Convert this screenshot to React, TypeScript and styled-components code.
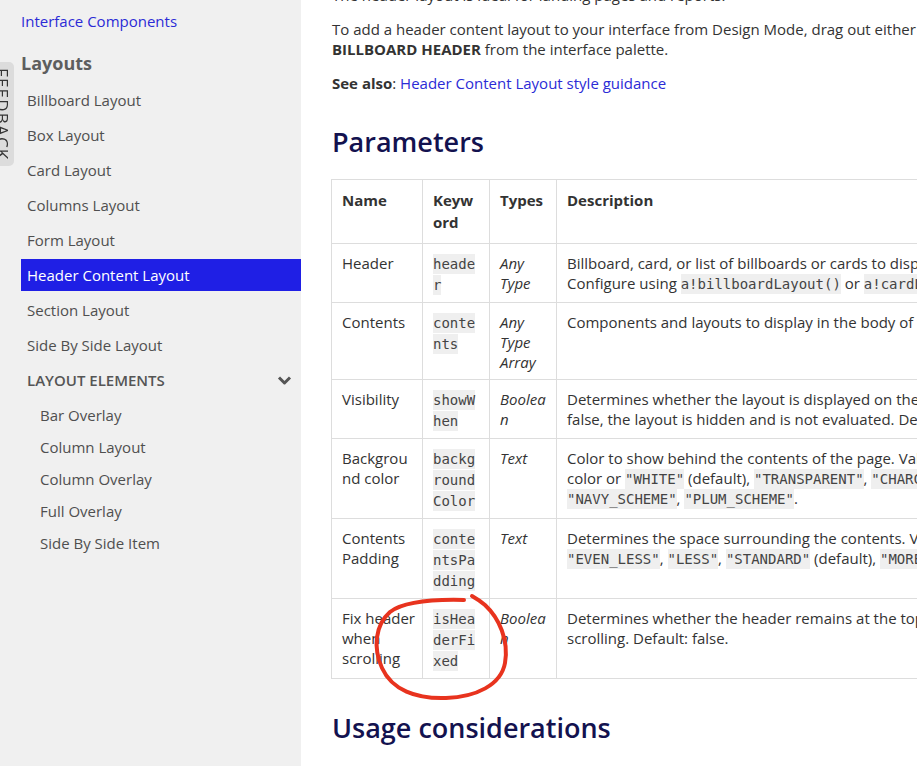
import React from 'react';
import styled, { createGlobalStyle } from 'styled-components';

const GlobalStyle = createGlobalStyle`
  html, body {
    margin: 0;
    padding: 0;
    overflow: hidden;
    background: #ffffff;
  }
  body {
    font-family: "Open Sans", "Liberation Sans", sans-serif;
    color: #333;
  }
`;

const Page = styled.div`
  display: flex;
  height: 766px;
  overflow: hidden;
`;

const Sidebar = styled.nav`
  flex: 0 0 301px;
  background: #f0f0f0;
  padding: 11px 0 0 21px;
  box-sizing: border-box;
`;

const TopLink = styled.a`
  display: block;
  font-size: 15px;
  line-height: 20px;
  color: #2b2bd6;
  text-decoration: none;
`;

const SideHeading = styled.div`
  margin: 20px 0 9px;
  font-size: 18px;
  line-height: 24px;
  font-weight: 700;
  color: #5e5e5e;
`;

const NavList = styled.ul`
  list-style: none;
  margin: 0;
  padding: 0;
`;

const NavItem = styled.li<{ $active?: boolean; $nested?: boolean }>`
  display: flex;
  align-items: center;
  justify-content: space-between;
  height: 32px;
  margin-bottom: ${p => (p.$nested ? '0' : '3px')};
  padding: 0 9px 0 ${p => (p.$nested ? '19px' : '6px')};
  font-size: 15px;
  color: ${p => (p.$active ? '#fff' : '#4f4f4f')};
  background: ${p => (p.$active ? '#1f1fe5' : 'transparent')};
`;

const GroupLabel = styled(NavItem)`
  font-weight: 600;
  text-transform: uppercase;
  color: #555;
`;

const FeedbackTab = styled.div`
  position: fixed;
  left: -10px;
  top: 62px;
  width: 24px;
  height: 104px;
  background: #dcdcdc;
  border-radius: 0 5px 5px 0;
  writing-mode: vertical-rl;
  display: flex;
  align-items: center;
  justify-content: center;
  font-size: 17px;
  font-weight: 400;
  letter-spacing: 1.2px;
  line-height: 24px;
  color: #333;
`;

const Main = styled.main`
  flex: 0 0 auto;
  width: 800px;
  padding: 0 0 0 31px;
  margin-top: -15px;
`;

const Para = styled.p`
  margin: 0 0 14px;
  font-size: 15px;
  line-height: 20px;
  color: #333;
`;

const Link = styled.a`
  color: #2b2bd6;
  text-decoration: none;
`;

const SectionTitle = styled.h2`
  margin: 33px 0 21px;
  font-size: 27px;
  line-height: 32px;
  font-weight: 600;
  color: #13124f;
`;

const Table = styled.table`
  width: 790px;
  border-collapse: collapse;
  table-layout: fixed;
  margin-left: -1px;
`;

const Th = styled.th`
  border: 1px solid #dddddd;
  padding: 9px 10px 10px 10px;
  text-align: left;
  vertical-align: top;
  font-size: 15px;
  line-height: 22px;
  font-weight: 700;
  color: #333;
  overflow-wrap: anywhere;
`;

const Td = styled.td<{ $mono?: boolean; $italic?: boolean }>`
  border: 1px solid #dddddd;
  padding: 9px 6px 7px 10px;
  vertical-align: top;
  font-size: 15px;
  line-height: ${p => (p.$mono ? '21px' : '20px')};
  font-style: ${p => (p.$italic ? 'italic' : 'normal')};
  color: #333;
  overflow-wrap: anywhere;
  word-break: ${p => (p.$mono ? 'break-all' : 'normal')};
`;

/* zero line-height keeps the mono face from stretching the row's line boxes */
const Code = styled.code`
  font-family: "DejaVu Sans Mono", "Liberation Mono", monospace;
  font-size: 14px;
  line-height: 0;
  background: #efefef;
  color: #444;
  padding: 2px 0;
`;

const Annotation = styled.svg`
  position: fixed;
  left: 0;
  top: 0;
  width: 917px;
  height: 766px;
  pointer-events: none;
`;

const Chevron = () => (
  <svg width="15" height="9" viewBox="0 0 15 9">
    <path d="M2 1.5 L7.5 7 L13 1.5" fill="none" stroke="#555" strokeWidth="3" strokeLinejoin="round" />
  </svg>
);

const layouts = [
  'Billboard Layout',
  'Box Layout',
  'Card Layout',
  'Columns Layout',
  'Form Layout',
  'Header Content Layout',
  'Section Layout',
  'Side By Side Layout',
];

const elements = ['Bar Overlay', 'Column Layout', 'Column Overlay', 'Full Overlay', 'Side By Side Item'];

type Param = {
  name: string;
  keyword: string;
  type: string;
  desc: React.ReactNode;
};

const params: Param[] = [
  {
    name: 'Header',
    keyword: 'header',
    type: 'Any Type',
    desc: (
      <>
        Billboard, card, or list of billboards or cards to display at the top of the page. Configure using{' '}
        <Code>a!billboardLayout()</Code> or <Code>a!cardLayout()</Code>.
      </>
    ),
  },
  {
    name: 'Contents',
    keyword: 'contents',
    type: 'Any Type Array',
    desc: <>Components and layouts to display in the body of the interface.</>,
  },
  {
    name: 'Visibility',
    keyword: 'showWhen',
    type: 'Boolean',
    desc: (
      <>
        Determines whether the layout is displayed on the interface. When set to false, the layout is hidden and is
        not evaluated. Default: true.
      </>
    ),
  },
  {
    name: 'Background color',
    keyword: 'backgroundColor',
    type: 'Text',
    desc: (
      <>
        Color to show behind the contents of the page. Valid values: Any valid hex color or <Code>"WHITE"</Code>{' '}
        (default), <Code>"TRANSPARENT"</Code>, <Code>"CHARCOAL_SCHEME"</Code>, <Code>"NAVY_SCHEME"</Code>,{' '}
        <Code>"PLUM_SCHEME"</Code>.
      </>
    ),
  },
  {
    name: 'Contents Padding',
    keyword: 'contentsPadding',
    type: 'Text',
    desc: (
      <>
        Determines the space surrounding the contents. Valid values: <Code>"NONE"</Code>, <Code>"EVEN_LESS"</Code>,{' '}
        <Code>"LESS"</Code>, <Code>"STANDARD"</Code> (default), <Code>"MORE"</Code>, <Code>"EVEN_MORE"</Code>.
      </>
    ),
  },
  {
    name: 'Fix header when scrolling',
    keyword: 'isHeaderFixed',
    type: 'Boolean',
    desc: <>Determines whether the header remains at the top of the page when scrolling. Default: false.</>,
  },
];

export default function App() {
  return (
    <>
      <GlobalStyle />
      <Page>
        <Sidebar>
          <TopLink href="#">Interface Components</TopLink>
          <SideHeading>Layouts</SideHeading>
          <NavList>
            {layouts.map(item => (
              <NavItem key={item} $active={item === 'Header Content Layout'}>
                {item}
              </NavItem>
            ))}
            <GroupLabel>
              Layout Elements
              <Chevron />
            </GroupLabel>
            {elements.map(item => (
              <NavItem key={item} $nested>
                {item}
              </NavItem>
            ))}
          </NavList>
        </Sidebar>

        <Main>
          <Para>The header layout is ideal for landing pages and reports.</Para>
          <Para>
            To add a header content layout to your interface from Design Mode, drag out either a <b>CARDS HEADER</b> or{' '}
            <b>BILLBOARD HEADER</b> from the interface palette.
          </Para>
          <Para>
            <b>See also</b>: <Link href="#">Header Content Layout style guidance</Link>
          </Para>

          <SectionTitle>Parameters</SectionTitle>
          <Table>
            <colgroup>
              <col style={{ width: 91 }} />
              <col style={{ width: 67 }} />
              <col style={{ width: 67 }} />
              <col />
            </colgroup>
            <thead>
              <tr>
                <Th>Name</Th>
                <Th>Keyword</Th>
                <Th>Types</Th>
                <Th>Description</Th>
              </tr>
            </thead>
            <tbody>
              {params.map(p => (
                <tr key={p.keyword}>
                  <Td>{p.name}</Td>
                  <Td $mono>
                    <Code>{p.keyword}</Code>
                  </Td>
                  <Td $italic>{p.type}</Td>
                  <Td>{p.desc}</Td>
                </tr>
              ))}
            </tbody>
          </Table>

          <SectionTitle>Usage considerations</SectionTitle>
        </Main>
      </Page>

      <FeedbackTab>FEEDBACK</FeedbackTab>

      <Annotation viewBox="0 0 917 766">
        <path
          d="M472 596 Q479 600 485 605 C499 618 509 640 505 663 C501 685 476 697 446 698 C416 699 392 690 382 668 C373 648 375 625 390 612 C402 603 425 599 464 600"
          fill="none"
          stroke="#e8331e"
          strokeWidth="4"
          strokeLinecap="round"
        />
      </Annotation>
    </>
  );
}
